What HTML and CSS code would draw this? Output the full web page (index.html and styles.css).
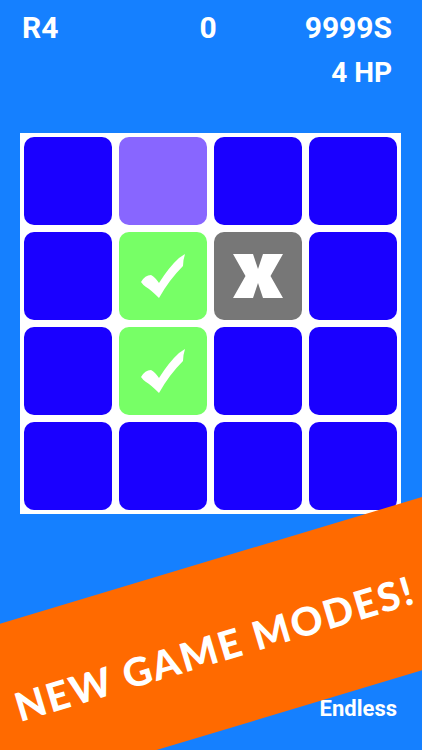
FILE: index.html
```html
<!DOCTYPE html>
<html>
<head>
<meta charset="utf-8">
<link rel="stylesheet" href="styles.css">
</head>
<body>
<div class="screen">
  <header class="hud">
    <div class="hud-row">
      <span class="hud-round">R4</span>
      <span class="hud-score">0</span>
      <span class="hud-time">9999S</span>
    </div>
    <div class="hud-row hud-row-end">
      <span class="hud-hp">4 HP</span>
    </div>
  </header>

  <div class="board">
    <div class="cell"></div>
    <div class="cell cell-hint"></div>
    <div class="cell"></div>
    <div class="cell"></div>

    <div class="cell"></div>
    <div class="cell cell-right">
      <svg class="mark-check" viewBox="0 0 44 44"><path d="M0 28 Q4 21 10 21 Q14 23 18 29 Q28 13 38 4 Q41 2 44 0 Q42 6 42 12 Q28 26 18 44 Q10 36 5 33 Q2 31 0 28 Z" fill="#fff"/></svg>
    </div>
    <div class="cell cell-wrong">
      <svg class="mark-x" viewBox="0 0 50 44"><polygon points="0,0 20,0 25,15 30,0 50,0 37.5,22 50,44 30,44 25,29 20,44 0,44 12.5,22" fill="#fff"/></svg>
    </div>
    <div class="cell"></div>

    <div class="cell"></div>
    <div class="cell cell-right">
      <svg class="mark-check" viewBox="0 0 44 44"><path d="M0 28 Q4 21 10 21 Q14 23 18 29 Q28 13 38 4 Q41 2 44 0 Q42 6 42 12 Q28 26 18 44 Q10 36 5 33 Q2 31 0 28 Z" fill="#fff"/></svg>
    </div>
    <div class="cell"></div>
    <div class="cell"></div>

    <div class="cell"></div>
    <div class="cell"></div>
    <div class="cell"></div>
    <div class="cell"></div>
  </div>

  <div class="mode">Endless</div>

  <div class="banner"><span class="banner-text">NEW GAME MODES!</span></div>
</div>
</body>
</html>
```

FILE: styles.css
```css
html, body {
  margin: 0;
  padding: 0;
}

body {
  background: #1580ff;
  font-family: Roboto, "Liberation Sans", sans-serif;
  color: #fff;
}

.screen {
  position: relative;
  width: 422px;
  height: 750px;
  overflow: hidden;
  display: flex;
  flex-direction: column;
  background: #1580ff;
}

.hud {
  padding: 13px 30px 0 22px;
  font-weight: 700;
}

.hud-row {
  display: flex;
  justify-content: space-between;
  align-items: baseline;
  font-size: 30px;
  line-height: 30px;
}

.hud-round, .hud-time {
  flex: 1;
}

.hud-time {
  text-align: right;
}

.hud-score {
  flex: 0 0 auto;
  margin-left: 2px;
}

.hud-row-end {
  justify-content: flex-end;
  margin-top: 16px;
  font-size: 28px;
  line-height: 28px;
}

.board {
  margin: 46px 0 0 20px;
  width: 381px;
  height: 381px;
  box-sizing: border-box;
  padding: 4px;
  background: #fff;
  display: grid;
  grid-template-columns: repeat(4, 1fr);
  grid-template-rows: repeat(4, 1fr);
  gap: 7.5px;
}

.cell {
  background: #1a00ff;
  border-radius: 10px;
  display: flex;
  align-items: center;
  justify-content: center;
}

.cell-hint {
  background: #8866ff;
}

.cell-right {
  background: #77ff66;
}

.cell-wrong {
  background: #777777;
}

.mark-check {
  width: 44px;
  height: 44px;
}

.mark-x {
  width: 50px;
  height: 44px;
}

.mode {
  margin-top: auto;
  padding: 0 25px 30px 0;
  text-align: right;
  font-weight: 700;
  font-size: 22px;
  line-height: 22px;
}

.banner {
  position: absolute;
  left: -189px;
  top: 564px;
  width: 800px;
  height: 166px;
  background: #ff6a00;
  transform: rotate(-16.7deg);
  display: flex;
  align-items: center;
  justify-content: center;
}

.banner-text {
  font-family: Lato, "Open Sans", sans-serif;
  font-weight: 900;
  font-size: 39.5px;
  letter-spacing: 2px;
  color: #fff;
  margin: 2px 0 0 6px;
}
```
